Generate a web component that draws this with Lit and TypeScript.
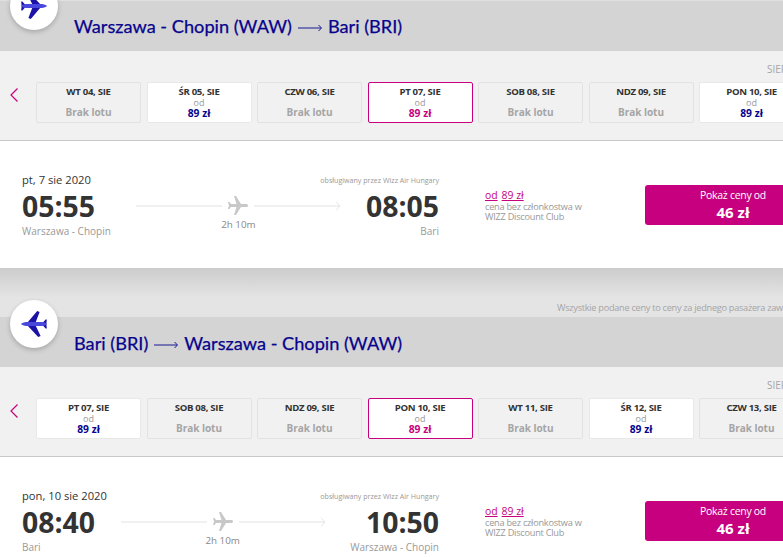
import { LitElement, html, css, svg } from "lit";
import { customElement } from "lit/decorators.js";

type Day = { label: string; price?: boolean; selected?: boolean };

const planeBlue = svg`
  <path fill="#1c12a6" d="M6.5 11.5 16.2 0 18.6 1 14.6 11.5ZM6.5 14.5 17.2 26 19.6 25 14.6 14.5ZM21.5 12 24.6 8.4 25.8 8.6 25.4 13 25.8 17.4 24.6 17.6 21.5 14Z"/>
  <path fill="#4a48dc" d="M0 13C1.5 11.6 4 11 7 11H21C23 11 25 12 26 13 25 14 23 15 21 15H7C4 15 1.5 14.4 0 13Z"/>`;

@customElement("app-root")
export class AppRoot extends LitElement {
  static styles = css`
    :host { display: block; width: 783px; height: 557px; overflow: hidden; background: #fff; font-family: "Open Sans", "Noto Sans", sans-serif; color: #333; }
    .section { position: relative; width: 783px; }
    .hdr { box-sizing: border-box; padding-left: 74px; background: #d4d4d4; font-family: Lato, sans-serif; font-size: 18.2px; color: #06038d; -webkit-text-stroke: 0.25px #06038d; line-height: 26px; display: flex; align-items: center; height: 51px; border-top: 1px solid #dfdfdf; }
    .hdr .title { display: flex; align-items: center; gap: 6px; white-space: nowrap; margin-top: -1px; }
    .hdr svg { display: block; margin-top: 4px; }
    .hdr.b { height: 50px; border-top: 0; }
    .hdr.b .title { margin-top: 1px; }
    .circle { position: absolute; left: 10px; width: 48px; height: 48px; border-radius: 50%; background: #fff; box-shadow: 0 2px 5px rgba(0,0,0,.22); display: flex; align-items: center; justify-content: center; z-index: 1; }
    .circle.a { top: -18px; }
    .circle.b { top: -17px; }
    .cal { height: 89px; background: #f1f1f1; border-bottom: 1px solid #c8c8c8; overflow: hidden; }
    .month { padding: 12px 0 0 767px; height: 19px; box-sizing: border-box; font-size: 10px; line-height: 12px; color: #a5a5a5; white-space: nowrap; }
    .calrow { display: flex; align-items: flex-start; padding-top: 12px; }
    .chev { width: 36px; flex: none; padding: 3px 0 0 10px; box-sizing: border-box; }
    .days { display: flex; gap: 5.5px; }
    .day { width: 105px; height: 41px; flex: none; box-sizing: border-box; border: 1px solid #e2e2e2; border-radius: 2px; text-align: center; padding-top: 3px; font-size: 10px; line-height: 11px; }
    .day.on { background: #fff; border-color: #e8e8e8; }
    .day.sel { background: #fff; border-color: #c6007e; }
    .day .d { font-weight: 700; color: #333; font-size: 9.6px; letter-spacing: -0.3px; }
    .day .od { font-size: 9px; color: #999; line-height: 10px; margin-top: 1px; }
    .day .p { font-weight: 700; color: #06038d; font-size: 10.3px; line-height: 11px; }
    .day.sel .p { color: #c6007e; }
    .day .no { font-weight: 700; color: #a5a5a5; font-size: 10px; letter-spacing: -0.05px; margin-top: 10px; }
    .flight { display: flex; background: #fff; box-sizing: border-box; padding: 31px 0 0 22px; }
    .flight.a { height: 127px; }
    .flight.b { height: 100px; }
    .main { width: 417px; flex: none; }
    .top { display: flex; justify-content: space-between; align-items: flex-start; height: 17px; line-height: 16px; }
    .date { font-size: 11.2px; color: #333; }
    .op { font-size: 7.1px; color: #999; }
    .times { display: flex; justify-content: space-between; }
    .pt { display: flex; flex-direction: column; }
    .pt.end { align-items: flex-end; }
    .time { font-size: 28.4px; font-weight: 700; line-height: 34px; color: #333; white-space: nowrap; }
    .city { font-size: 10px; color: #999; line-height: 14px; margin-top: 1px; white-space: nowrap; }
    .line { width: 204px; flex: none; display: flex; flex-direction: column; align-items: center; font-size: 9.8px; color: #888; padding-top: 7px; }
    .line svg { display: block; }
    .dur { margin-top: 2px; line-height: 14px; }
    .price { margin-left: 46px; width: 114px; flex: none; padding-top: 16px; font-size: 9.2px; letter-spacing: -0.25px; line-height: 10px; color: #999; }
    .price .links { display: flex; gap: 4px; font-size: 10.4px; letter-spacing: 0; line-height: 14px; color: #c6007e; text-decoration: underline; }
    .btn { margin-left: 46px; width: 176px; height: 40px; flex: none; margin-top: 13px; background: #c6007e; border-radius: 3px; color: #fff; text-align: center; box-sizing: border-box; padding-top: 3px; font-size: 10.5px; letter-spacing: -0.3px; line-height: 15px; }
    .btn b { display: block; font-size: 15px; letter-spacing: 0; line-height: 18px; }
    .gap { height: 49px; background: linear-gradient(#cccccc, #e4e4e4 60%); display: flex; align-items: flex-end; }
    .note { font-size: 9.2px; letter-spacing: -0.28px; color: #a5a5a5; white-space: nowrap; padding: 0 0 2px 557px; line-height: 14px; }
  `;

  private day(d: Day) {
    const cls = d.selected ? "day sel" : d.price ? "day on" : "day";
    return html`<div class=${cls}>
      <div class="d">${d.label}</div>
      ${d.price
        ? html`<div class="od">od</div><div class="p">89 zł</div>`
        : html`<div class="no">Brak lotu</div>`}
    </div>`;
  }

  private cal(days: Day[]) {
    return html`<div class="cal">
      <div class="month">SIERPIEŃ</div>
      <div class="calrow">
        <div class="chev"><svg width="8" height="14" viewBox="0 0 8 14"><path d="M7.5.5 1 7l6.5 6.5" fill="none" stroke="#c6007e" stroke-width="1.2"/></svg></div>
        <div class="days">${days.map((d) => this.day(d))}</div>
      </div>
    </div>`;
  }

  private flight(kind: string, date: string, t1: string, c1: string, t2: string, c2: string) {
    return html`<div class="flight ${kind}">
      <div class="main">
        <div class="top"><span class="date">${date}</span><span class="op">obsługiwany przez Wizz Air Hungary</span></div>
        <div class="times">
          <div class="pt"><span class="time">${t1}</span><span class="city">${c1}</span></div>
          <div class="line">
            <svg width="204" height="20" viewBox="0 0 204 20">
              <path d="M0 10H86M118 10H204" stroke="#ececec" stroke-width="1.4" fill="none"/>
              <path d="M200 5.5 204 10 200 14.5" stroke="#e6e6e6" fill="none"/>
              <g transform="translate(90 -2) rotate(90 12 12)"><path fill="#c8c8c8" d="M21 16v-2l-8-5V3.5c0-.83-.67-1.5-1.5-1.5S10 2.67 10 3.5V9l-8 5v2l8-2.5V19l-2 1.5V22l3.5-1 3.5 1v-1.5L13 19v-5.5l8 2.5z"/></g>
            </svg>
            <span class="dur">2h 10m</span>
          </div>
          <div class="pt end"><span class="time">${t2}</span><span class="city">${c2}</span></div>
        </div>
      </div>
      <div class="price">
        <div class="links"><span>od</span><span>89 zł</span></div>
        cena bez członkostwa w<br />WIZZ Discount Club
      </div>
      <div class="btn">Pokaż ceny od<b>46 zł</b></div>
    </div>`;
  }

  private arrow() {
    return html`<svg width="24" height="8" viewBox="0 0 24 8"><path d="M0 4H23M20.5 1 23.5 4 20.5 7" fill="none" stroke="#06038d" stroke-width=".9"/></svg>`;
  }

  render() {
    const d1: Day[] = [
      { label: "WT 04, SIE" },
      { label: "ŚR 05, SIE", price: true },
      { label: "CZW 06, SIE" },
      { label: "PT 07, SIE", price: true, selected: true },
      { label: "SOB 08, SIE" },
      { label: "NDZ 09, SIE" },
      { label: "PON 10, SIE", price: true },
    ];
    const d2: Day[] = [
      { label: "PT 07, SIE", price: true },
      { label: "SOB 08, SIE" },
      { label: "NDZ 09, SIE" },
      { label: "PON 10, SIE", price: true, selected: true },
      { label: "WT 11, SIE" },
      { label: "ŚR 12, SIE", price: true },
      { label: "CZW 13, SIE" },
    ];
    return html`
      <div class="section">
        <div class="circle a"><svg width="26" height="26" viewBox="0 0 26 26"><g transform="rotate(180 13 13)">${planeBlue}</g></svg></div>
        <div class="hdr"><div class="title">Warszawa - Chopin (WAW) ${this.arrow()} Bari (BRI)</div></div>
        ${this.cal(d1)}
        ${this.flight("a", "pt, 7 sie 2020", "05:55", "Warszawa - Chopin", "08:05", "Bari")}
      </div>
      <div class="gap"><span class="note">Wszystkie podane ceny to ceny za jednego pasażera zawierają</span></div>
      <div class="section">
        <div class="circle b"><svg width="26" height="26" viewBox="0 0 26 26">${planeBlue}</svg></div>
        <div class="hdr b"><div class="title">Bari (BRI) ${this.arrow()} Warszawa - Chopin (WAW)</div></div>
        ${this.cal(d2)}
        ${this.flight("b", "pon, 10 sie 2020", "08:40", "Bari", "10:50", "Warszawa - Chopin")}
      </div>
    `;
  }
}
